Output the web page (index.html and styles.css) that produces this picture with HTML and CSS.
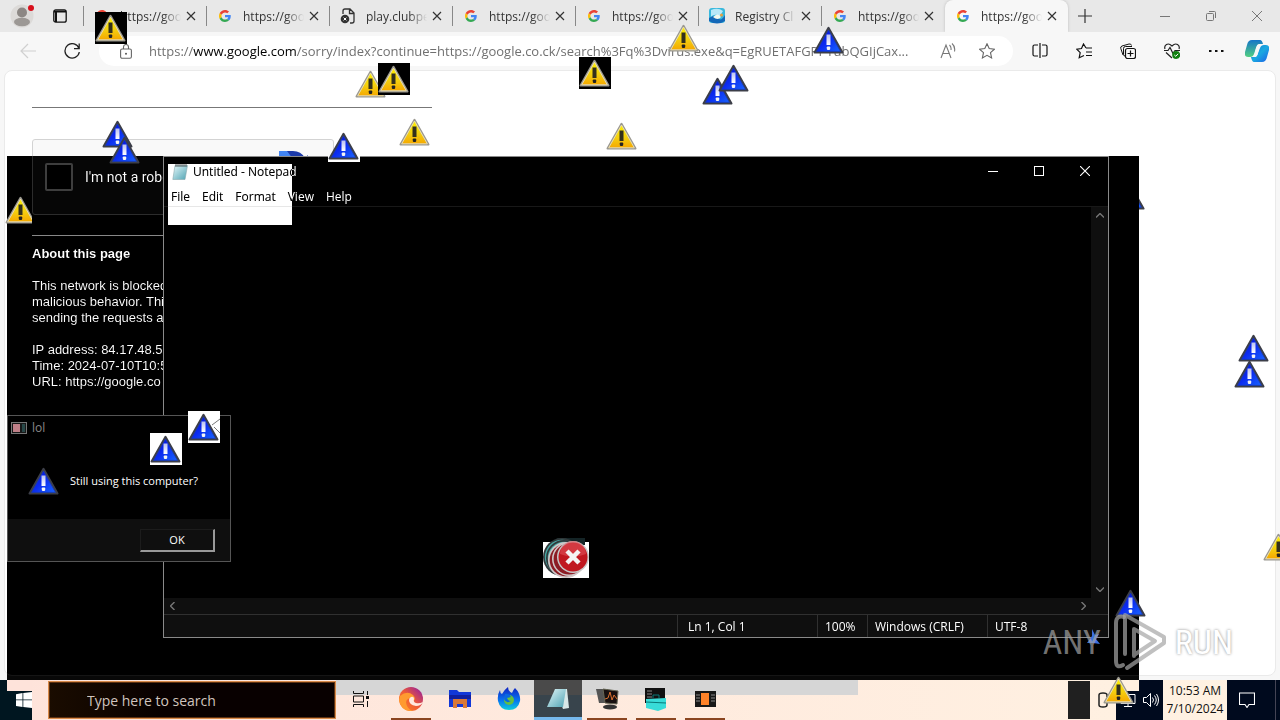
FILE: index.html
```html
<!DOCTYPE html>
<html lang="en">
<head>
<meta charset="utf-8">
<title>Desktop</title>
<link rel="stylesheet" href="styles.css">
</head>
<body>
<svg class="defs" aria-hidden="true">
  <defs>
    <linearGradient id="gy" x1="0" y1="0" x2="0" y2="1"><stop offset="0" stop-color="#fff200"/><stop offset=".55" stop-color="#f4d010"/><stop offset="1" stop-color="#f5a800"/></linearGradient>
    <linearGradient id="gb" x1="0" y1="0" x2="1" y2="1"><stop offset="0" stop-color="#0008d8"/><stop offset=".5" stop-color="#0c2cf0"/><stop offset="1" stop-color="#1864ff"/></linearGradient>
    <linearGradient id="gw" x1="0" y1="0" x2="0" y2="1"><stop offset="0" stop-color="#b8c0f4"/><stop offset="1" stop-color="#fff"/></linearGradient>
    <linearGradient id="co" x1="0" y1="0" x2="1" y2="1"><stop offset="0" stop-color="#1478d4"/><stop offset=".5" stop-color="#1aa9e0"/><stop offset="1" stop-color="#1c5fe8"/></linearGradient>
    <linearGradient id="cg" x1="0" y1="0" x2="0" y2="1"><stop offset="0" stop-color="#1675c8"/><stop offset="1" stop-color="#52cf82"/></linearGradient>
    <linearGradient id="ed" x1="0" y1="1" x2="1" y2="0"><stop offset="0" stop-color="#ff8a1e"/><stop offset=".5" stop-color="#ee5a38"/><stop offset="1" stop-color="#8b18a8"/></linearGradient>
    <linearGradient id="fx" x1="0" y1="0" x2="0" y2="1"><stop offset="0" stop-color="#1020c0"/><stop offset=".6" stop-color="#0878f0"/><stop offset="1" stop-color="#10d0d8"/></linearGradient>
    <linearGradient id="np" x1="0" y1="0" x2="1" y2="1"><stop offset="0" stop-color="#e4f8fa"/><stop offset="1" stop-color="#4fa3b3"/></linearGradient>
    <symbol id="yellow" viewBox="0 0 32 32">
      <path d="M15.500 3.800 29.500 28.600h-28z" fill="#aaa8a0" stroke="#9a9890" stroke-width="2" stroke-linejoin="round"/>
      <path d="M15.500 5 28.300 27.800H2.700z" fill="url(#gy)" stroke="#e8dcb0" stroke-width="1" stroke-linejoin="round"/>
      <path d="M13.500 10.500h4v10.500h-4z" fill="#33301c"/><rect x="13.800" y="22.500" width="3.400" height="3.400" rx=".8" fill="#222"/>
    </symbol>
    <symbol id="blue" viewBox="0 0 32 32">
      <path d="M15.500 3.800 29.500 28.600h-28z" fill="#454858" stroke="#3c3e48" stroke-width="2" stroke-linejoin="round"/>
      <path d="M15.500 6 27.500 27.400h-24z" fill="url(#gb)" stroke="#1838b0" stroke-width=".8" stroke-linejoin="round"/>
      <path d="M13.500 10.500h4v10.500h-4z" fill="url(#gw)"/><rect x="13.800" y="22.500" width="3.400" height="3.400" rx=".8" fill="#f4f4f4"/>
    </symbol>
    <symbol id="g" viewBox="0 0 48 48">
      <path fill="#ea4335" d="M24 9.500c3.540 0 6.710 1.220 9.210 3.600l6.850-6.850C35.900 2.380 30.470 0 24 0 14.620 0 6.510 5.380 2.560 13.220l7.980 6.190C12.430 13.720 17.740 9.500 24 9.500z"/>
      <path fill="#4285f4" d="M46.980 24.550c0-1.570-.15-3.090-.38-4.550H24v9.020h12.940c-.58 2.960-2.260 5.480-4.780 7.180l7.730 6c4.510-4.180 7.090-10.360 7.090-17.650z"/>
      <path fill="#fbbc05" d="M10.530 28.590c-.48-1.450-.76-2.990-.76-4.590s.27-3.140.76-4.590l-7.980-6.190C.92 16.460 0 20.120 0 24s.92 7.540 2.560 10.780z"/>
      <path fill="#34a853" d="M24 48c6.480 0 11.930-2.130 15.890-5.810l-7.730-6c-2.150 1.450-4.920 2.300-8.160 2.300-6.260 0-11.570-4.220-13.470-9.910l-7.980 6.190C6.510 42.620 14.620 48 24 48z"/>
    </symbol>
    <symbol id="x" viewBox="0 0 10 10"><path d="M1 1l8 8M9 1 1 9" stroke="currentColor" stroke-width="1.200"/></symbol>
    <symbol id="err" viewBox="0 0 32 32"><circle cx="16" cy="16" r="16" fill="#c8c8c8"/><circle cx="16" cy="16" r="14.500" fill="#c01820"/><path d="M3 13a13 13 0 0 1 26 0q-13 5-26 0z" fill="#e05058" opacity=".6"/><path d="M10 10l12 12M22 10 10 22" stroke="#f4f4f4" stroke-width="4.500"/></symbol>
    <symbol id="rim" viewBox="0 0 32 32"><circle cx="16" cy="16" r="16" fill="#d0c8c8"/><circle cx="16" cy="16" r="14.500" fill="#8c1c24"/></symbol>
    <symbol id="rimteal" viewBox="0 0 32 32"><circle cx="16" cy="16" r="16" fill="#30383a"/><circle cx="16" cy="16" r="14.500" fill="#48a8a4"/></symbol>
  </defs>
</svg>

<main class="browser">
  <header class="tabs">
    <div class="tabs-lead">
      <svg class="avatar" viewBox="0 0 24 24"><circle cx="12" cy="12" r="11.500" fill="#dcdad8"/><circle cx="12" cy="8.500" r="5" fill="#8c8784"/><ellipse cx="12" cy="18" rx="8" ry="4.200" fill="#9c9895"/><circle cx="21" cy="4" r="3" fill="#d8101c"/></svg>
      <svg class="panes" viewBox="0 0 14 14"><rect x=".8" y=".8" width="12.400" height="12.400" rx="2" fill="none" stroke="#111" stroke-width="1.300"/><path d="M1 2.500h12M3 2v11" stroke="#111" stroke-width="2"/></svg>
    </div>
    <div class="tab"><svg class="fav"><use href="#g"/></svg><span>https://goo</span><button aria-label="Close tab"><svg><use href="#x"/></svg></button></div>
    <div class="tab"><svg class="fav"><use href="#g"/></svg><span>https://goo</span><button aria-label="Close tab"><svg><use href="#x"/></svg></button></div>
    <div class="tab"><svg class="fav doc" viewBox="0 0 16 16"><path d="M3 6V3a2 2 0 0 1 2-2h5l4 4v8a2 2 0 0 1-2 2h-2M9.500 1v4.500H14" fill="none" stroke="#333" stroke-width="1.300"/><circle cx="5" cy="11" r="4.300" fill="#333"/><path d="M3.600 9.600l2.800 2.800M6.400 9.600l-2.800 2.800" stroke="#fff"/></svg><span>play.clubpe</span><button aria-label="Close tab"><svg><use href="#x"/></svg></button></div>
    <div class="tab"><svg class="fav"><use href="#g"/></svg><span>https://goo</span><button aria-label="Close tab"><svg><use href="#x"/></svg></button></div>
    <div class="tab"><svg class="fav"><use href="#g"/></svg><span>https://goo</span><button aria-label="Close tab"><svg><use href="#x"/></svg></button></div>
    <div class="tab"><svg class="fav doc" viewBox="0 0 16 16"><rect width="16" height="15" rx="3" fill="#38b8dc"/><path d="M2 2q7-3 12 1l-3 5q-6-3-9 1z" fill="#b8e8f8"/><path d="M0 10q6-4 9 0t7-3v6q-8 5-16 0z" fill="#1468b8"/><path d="M4 9q5-5 8 0-3 4-8 0z" fill="#f4f8ee"/><circle cx="12.500" cy="7" r="1.500" fill="#e8a040"/></svg><span>Registry Cl</span><button aria-label="Close tab"><svg><use href="#x"/></svg></button></div>
    <div class="tab"><svg class="fav"><use href="#g"/></svg><span>https://goo</span><button aria-label="Close tab"><svg><use href="#x"/></svg></button></div>
    <div class="tab active"><svg class="fav"><use href="#g"/></svg><span>https://goo</span><button aria-label="Close tab"><svg><use href="#x"/></svg></button></div>
    <button class="plus" aria-label="New tab"><svg viewBox="0 0 14 14"><path d="M7 0v14M0 7h14" stroke="#333" stroke-width="1.200"/></svg></button>
    <div class="winbtns">
      <button aria-label="Minimize"><svg viewBox="0 0 10 10"><path d="M0 5.500h10" stroke="#777"/></svg></button>
      <button aria-label="Restore"><svg viewBox="0 0 10 10"><rect x=".5" y="2.500" width="7" height="7" rx="1" fill="none" stroke="#777"/><path d="M3 .5h5.500a1 1 0 0 1 1 1V7" fill="none" stroke="#777"/></svg></button>
      <button aria-label="Close"><svg viewBox="0 0 10 10"><path d="M0 0l10 10M10 0 0 10" stroke="#777"/></svg></button>
    </div>
  </header>
  <div class="toolbar">
    <button class="back" aria-label="Back"><svg viewBox="0 0 16 16"><path d="M16 8H1M8 1 1 8l7 7" fill="none" stroke="#d0d0d0" stroke-width="1.200"/></svg></button>
    <button class="reload" aria-label="Reload"><svg viewBox="0 0 16 16"><path d="M15 5.500A7.200 7.200 0 1 0 15.300 9M15.200 .5v5.200H10" fill="none" stroke="#222" stroke-width="1.300"/></svg></button>
    <div class="address">
      <svg class="lock" viewBox="0 0 12 15"><rect x=".6" y="5" width="10.800" height="9.300" rx="1.500" fill="none" stroke="#666" stroke-width="1.100"/><path d="M3.500 5V3a2.500 2.500 0 0 1 5 0v2" fill="none" stroke="#666" stroke-width="1.100"/><circle cx="6" cy="9.700" r="1" fill="#555"/></svg>
      <div class="url">https://<b>www.google.com</b>/sorry/index?continue=https://google.co.ck/search%3Fq%3Dvirus.exe&amp;q=EgRUETAFGPPYubQGIjCax...</div>
      <svg class="aloud" viewBox="0 0 16 16"><path d="M1 15 6 2l5 13M3 10.500h6.500M9.500 2q2 2 1.500 5M12 .5q3.500 3 2.500 8" fill="none" stroke="#777" stroke-width="1.100"/></svg>
      <svg class="star" viewBox="0 0 16 16"><path d="M8 .8l2.200 4.800 5.200.6-3.900 3.500 1.100 5.200L8 12.300l-4.600 2.600 1.100-5.200L.6 6.200l5.200-.6z" fill="none" stroke="#666" stroke-width="1.100"/></svg>
    </div>
    <nav class="tools">
      <button aria-label="Split screen"><svg viewBox="0 0 16 16"><path d="M6 2H2.500A1.500 1.500 0 0 0 1 3.500v8A1.500 1.500 0 0 0 2.500 13H6M10 2h3.500A1.500 1.500 0 0 1 15 3.500v8a1.500 1.500 0 0 1-1.500 1.500H10M8 0v15" fill="none" stroke="#111" stroke-width="1.200"/></svg></button>
      <button aria-label="Favorites"><svg viewBox="0 0 16 16"><path d="M10 5 7.500 1 5.500 5.500.8 6.200l3.400 3.500-1 5L8 12.500M10 5h6M10 9h6M10 12.500h6" fill="none" stroke="#111" stroke-width="1.200"/></svg></button>
      <button aria-label="Collections"><svg viewBox="0 0 16 16"><path d="M3 12 .8 5.500A2 2 0 0 1 2 3l7-2q2-.5 2.500 1.500M5.500 13H5a1.500 1.500 0 0 1-1.500-1.500v-6A2 2 0 0 1 5.500 3.500H12" fill="none" stroke="#111"/><rect x="5.500" y="5.500" width="10" height="10" rx="2" fill="#f7f7f7" stroke="#111" stroke-width="1.200"/><path d="M10.500 7.500v6M7.500 10.500h6" stroke="#111" stroke-width="1.200"/></svg></button>
      <button aria-label="Browser essentials"><svg viewBox="0 0 16 16"><path d="M1 6Q0 3 2.500 1.500T8 3q3-3 5.500-1.500T15 6M2 9.500 8 15M0 7.500h4l2-3 3 6 2-3h5" fill="none" stroke="#222" stroke-width="1.200"/><circle cx="12.200" cy="12" r="4" fill="#108010"/><path d="M10.300 12l1.500 1.300 2.300-2.500" fill="none" stroke="#fff"/></svg></button>
      <button aria-label="More"><svg viewBox="0 0 16 16"><path d="M1 7h2.500v2H1zM7 7h2.500v2H7zM13 7h2.500v2H13z" fill="#111"/></svg></button>
      <button class="copilot" aria-label="Copilot"><svg viewBox="0 0 24 22"><path d="M7 0h8q2 0 3 4h-4q-2 0-3 4l-2 6q-1 3-4 3H3q-4 0-3-5l2-7Q3 0 7 0z" fill="url(#cg)"/><path d="M17 22H9q-2 0-3-5h4q2 0 3-4l2-5q1-3 4-3h2q4 0 3 5l-2 7q-1 5-5 5z" fill="url(#co)"/><path d="M11 8q1-3 3-3h3q-2 0-3 4l-1 4q-1 4-3 4H7q2 0 3-4z" fill="#f7f7f7"/></svg></button>
    </nav>
  </div>
  <section class="page">
    <hr>
    <div class="captcha">
      <input type="checkbox" id="robot"><label for="robot">I'm not a robot</label>
      <svg class="recap" viewBox="0 0 32 32"><path d="M2 0h14q8 0 12 7l3-3v12H20l4-4a9 9 0 0 0-8-4z" fill="#1c3aa9"/><path d="M2 0h8l6 8a9 9 0 0 0-8 5L2 8z" fill="#4285f4"/></svg>
    </div>
    <hr>
    <article>
      <h1>About this page</h1>
      <p>This network is blocked due to unaddressed abuse complaints about malicious behavior. This page checks to see if it's really a human sending the requests and not a robot coming from this network.</p>
      <p>IP address: 84.17.48.5<br>Time: 2024-07-10T10:5<br>URL: https://google.co</p>
    </article>
  </section>
  <div class="invert"></div>
</main>

<section class="notepad">
  <div class="patch"></div>
  <header class="np-title">
    <svg class="np-icon" viewBox="0 0 16 16"><path d="M3 1.500h12.500L13 15.500H.8z" fill="url(#np)" stroke="#88a8ac" stroke-width=".6"/><path d="M4 0v3M6 0v3M8 0v3M10 0v3M12 0v3M14 0v3" stroke="#333" stroke-width=".8"/></svg>
    <span>Untitled - Notepad</span>
    <div class="np-btns">
      <button aria-label="Minimize"><svg viewBox="0 0 10 10"><path d="M0 5.500h10" stroke="#fff"/></svg></button>
      <button aria-label="Maximize"><svg viewBox="0 0 10 10"><rect x=".5" y=".5" width="9" height="9" fill="none" stroke="#fff"/></svg></button>
      <button aria-label="Close"><svg viewBox="0 0 10 10"><path d="M0 0l10 10M10 0 0 10" stroke="#fff" stroke-width="1.100"/></svg></button>
    </div>
  </header>
  <nav class="menu"><button>File</button><button>Edit</button><button>Format</button><button>View</button><button>Help</button></nav>
  <div class="np-body">
    <div class="np-text"></div>
    <div class="vscroll"><svg viewBox="0 0 8 5"><path d="M0 4.500l4-4 4 4" fill="none" stroke="#777" stroke-width="1.400"/></svg><svg viewBox="0 0 8 5"><path d="M0 .5l4 4 4-4" fill="none" stroke="#777" stroke-width="1.400"/></svg></div>
  </div>
  <div class="hscroll"><svg viewBox="0 0 5 8"><path d="M4.500 0l-4 4 4 4" fill="none" stroke="#777" stroke-width="1.400"/></svg><svg viewBox="0 0 5 8"><path d="M.5 0l4 4-4 4" fill="none" stroke="#777" stroke-width="1.400"/></svg></div>
  <footer class="status"><span class="s0"></span><span class="s1">Ln 1, Col 1</span><span class="s2">100%</span><span class="s3">Windows (CRLF)</span><span class="s4">UTF-8</span></footer>
</section>

<section class="dialog">
  <header><svg viewBox="0 0 16 12"><rect x=".5" y=".5" width="15" height="11" fill="#181818" stroke="#777"/><path d="M2 2h7v8H2z" fill="#c08088"/><path d="M11 2h3v8h-3z" fill="#284848"/></svg><span>lol</span></header>
  <div class="msg"><svg><use href="#blue"/></svg><p>Still using this computer?</p></div>
  <footer><button>OK</button></footer>
</section>

<footer class="taskbar">
  <div class="start"><svg viewBox="0 0 16 16"><path d="M0 2.200 6.500 1v6.500H0zM7.300 .9 16 0v7.500H7.300zM0 8.300h6.500V15L0 13.900zM7.300 8.300H16V16l-8.700-.9z" fill="#fff"/></svg></div>
  <input class="search" type="text" aria-label="Search" placeholder="Type here to search">
  <div class="apps">
    <div class="shade"></div>
    <button class="app first" aria-label="Task View"><svg class="tv" viewBox="0 0 16 16"><path d="M.5 0v2.500h10V0M.5 16v-2.500h10V16M.5 5h10v6H.5zM14.500 0v4M14.500 10v6" fill="none" stroke="#111"/><path d="M13 5h3v3h-3z" fill="#111"/></svg></button>
    <button class="app run" aria-label="Edge"><svg viewBox="0 0 24 24"><circle cx="12" cy="12" r="12" fill="url(#ed)"/><path d="M1 9Q8 3 14 8q4 4 0 6-3 1-2-3Q5 12 8 19q2 4 6 5Q2 25 0 13z" fill="#ff9a30"/><path d="M12 10q3-1 3 2-1 3 2 4t7-1q-2 4-7 4-7-1-7-6 0-2 2-3z" fill="#ffe8df"/></svg></button>
    <button class="app" aria-label="Files"><svg viewBox="0 0 24 24"><path d="M1 3h8l2 2h12v15H1z" fill="#1238d8"/><path d="M1 8h22v4H1z" fill="#1020a0"/><path d="M5 12h14v9h-4v-4H9v4H5z" fill="#d87838"/></svg></button>
    <button class="app" aria-label="Firefox"><svg viewBox="0 0 24 24"><path d="M3 3q0 3 2 4 2-4 6-7 0 4 4 6 1-3 3-5 6 6 5 13-2 9-11 9T1 14Q0 8 3 3z" fill="url(#fx)"/><circle cx="12" cy="13" r="5" fill="#64c040"/><path d="M8 7q4-1 6 3l-4 1q1 3 4 3-5 3-7-2z" fill="#0868e0"/></svg></button>
    <button class="app on" aria-label="Notepad"><svg viewBox="0 0 24 24"><path d="M9 2h12l2 19-6 1z" fill="#d8e8e8"/><path d="M9 2h11l-3 18H1z" fill="url(#np)"/></svg></button>
    <button class="app run" aria-label="Monitor"><svg viewBox="0 0 24 24"><path d="M1 2h12v14H4z" fill="#555"/><path d="M8 2l15 2-1 13-12-1z" fill="#181010" stroke="#665"/><path d="M10 12l3-1 2-6 2 8 2-5 3 4" fill="none" stroke="#d87030"/><ellipse cx="15" cy="20" rx="7" ry="2.500" fill="#333"/></svg></button>
    <button class="app run" aria-label="Tools"><svg viewBox="0 0 24 24"><path d="M1 1h20v15H1z" fill="#111"/><path d="M3 4h5M3 7h5M3 10h5" stroke="#888"/><path d="M2 12l20-1v10l-8 3-12-3z" fill="#38dcd8"/><path d="M9 11V8h6v3M2 15l20 1" fill="none" stroke="#087878"/></svg></button>
    <button class="app run" aria-label="Terminal"><svg viewBox="0 0 24 24"><path d="M2 4h21v16H2z" fill="#181818"/><path d="M3 8h4M3 11h4M3 14h4M18 8h4M18 11h4M18 14h4" stroke="#888"/><path d="M8 6h8v12H8z" fill="#ff8228"/></svg></button>
  </div>
  <div class="block"></div>
  <div class="sync"><svg viewBox="0 0 12 16"><path d="M2 5V3q0-2 4-2t4 2v2M2 11v2q0 2 4 2t4-2v-2M2 5v6M10 6v4" fill="none" stroke="#222" stroke-width="1.500"/></svg></div>
  <div class="tray"><svg viewBox="0 0 16 16"><path d="M1 2.500h14v9H1zM8 11v3M4 14.500h8" fill="none" stroke="#fff"/></svg><svg viewBox="0 0 16 16"><path d="M.5 5.500h3l4-4v13l-4-4h-3zM9.500 5.500q2 2.500 0 5M11.500 3.500q3.500 4.500 0 9M13.500 2q4 6 0 12" fill="none" stroke="#fff"/></svg></div>
  <time>10:53 AM<br>7/10/2024</time>
  <button class="notes" aria-label="Notifications"><svg viewBox="0 0 16 16"><path d="M.5 1h15v11.500H10L8 15.500 6 12.500H.5z" fill="none" stroke="#fff" stroke-width="1.100"/></svg></button>
</footer>

<div class="marks">
  <svg class="m y1 blk"><use href="#yellow"/></svg><svg class="m y2"><use href="#yellow"/></svg><svg class="m y3 blk"><use href="#yellow"/></svg><svg class="m y4"><use href="#yellow"/></svg><svg class="m y5 blk"><use href="#yellow"/></svg><svg class="m y6"><use href="#yellow"/></svg><svg class="m y7"><use href="#yellow"/></svg><svg class="m y8"><use href="#yellow"/></svg><svg class="m y9"><use href="#yellow"/></svg><svg class="m y10"><use href="#yellow"/></svg>
  <svg class="m b1"><use href="#blue"/></svg><svg class="m b2"><use href="#blue"/></svg><svg class="m b3"><use href="#blue"/></svg><svg class="m b4"><use href="#blue"/></svg><svg class="m b5"><use href="#blue"/></svg><svg class="m b6"><use href="#blue"/></svg><svg class="m b7"><use href="#blue"/></svg><svg class="m b8"><use href="#blue"/></svg><svg class="m b9"><use href="#blue"/></svg><svg class="m b10"><use href="#blue"/></svg><svg class="m b11 wht"><path d="M24 14l8-6M26 16l6 6" stroke="#777"/><use href="#blue"/></svg><svg class="m b12 wht"><use href="#blue"/></svg>
  <svg class="shard" viewBox="0 0 14 16"><path d="M0 14 5 7V0l3 6 4-1-3 5 4 5-7-1z" fill="#3c70e0"/></svg>
  <svg class="errs" viewBox="0 0 46 40"><path d="M0 4h46v36H0z" fill="#fff"/><path d="M14 0h28v7H8z" fill="#142426"/><use href="#rimteal" x="0" y="0" width="38" height="38"/><use href="#rimteal" x="3" y="2" width="36" height="36"/><use href="#rim" x="5" y="4" width="36" height="36"/><use href="#rim" x="9" y="4" width="34" height="34"/><use href="#err" x="14" y="3" width="32" height="32"/></svg>
</div>
<div class="watermark"><span>ANY</span><svg viewBox="0 0 56 60"><g fill="none" stroke="currentColor" stroke-width="4" stroke-linejoin="round" stroke-linecap="round"><path d="M11 5Q3 3 3 11v38q0 8 7 4"/><path d="M12 42V3l39 22v6L14 56"/><path d="M21 44V17l21 12-21 14"/></g></svg><span class="run-word">RUN</span></div>
</body>
</html>
```

FILE: styles.css
```css
* { box-sizing: border-box; }
body { margin: 0; height: 100vh; overflow: hidden; display: flex; flex-direction: column; font-family: "Open Sans", "Noto Sans", sans-serif; font-size: 12px; background: #fff; position: relative; }
button { border: 0; background: none; padding: 0; font: inherit; color: inherit; display: flex; align-items: center; justify-content: center; flex: none; }
svg { flex: none; display: block; }
.defs { position: absolute; width: 0; height: 0; }

.browser { flex: 1; min-height: 0; display: flex; flex-direction: column; background: #f7f7f7; position: relative; isolation: isolate; padding-bottom: 4px; }
.tabs { height: 32px; flex: none; background: #e8e8e8; display: flex; }
.tabs-lead { width: 84px; flex: none; display: flex; align-items: center; gap: 19px; padding-left: 10px; }
.avatar { width: 24px; height: 24px; overflow: visible; }
.panes { width: 14px; height: 14px; }
.tab { flex: 0 1 123px; min-width: 0; display: flex; align-items: center; padding: 0 6px 0 12px; position: relative; color: #333; }
.tab::before { content: ""; width: 1px; height: 20px; background: #888; margin-left: -13px; margin-right: 12px; }
.tab.active { background: #f7f7f7; border-radius: 8px 8px 0 0; box-shadow: 0 0 3px #bbb; clip-path: inset(0 -4px 0 -4px); }
.tab.active::before { background: none; }
.fav { width: 12px; height: 12px; margin-right: 12px; }
.fav.doc { width: 16px; height: 16px; margin: 0 10px 0 -2px; }
.tab span { flex: 1; overflow: hidden; white-space: nowrap; -webkit-mask-image: linear-gradient(90deg, #000 70%, transparent); mask-image: linear-gradient(90deg, #000 70%, transparent); }
.tab button { width: 20px; height: 20px; }
.tab button svg { width: 10px; height: 10px; }
.plus { width: 34px; }
.plus svg { width: 14px; height: 14px; }
.winbtns { display: flex; margin-left: auto; }
.winbtns button { width: 46px; }
.winbtns svg { width: 10px; height: 10px; }

.toolbar { height: 38px; flex: none; display: flex; align-items: center; padding-left: 20px; }
.toolbar button svg { width: 16px; height: 16px; }
.reload { margin: 0 19px 0 28px; }
.address { flex: 1; min-width: 0; height: 30px; background: #fff; border-radius: 15px; display: flex; align-items: center; padding: 0 18px 0 21px; }
.lock { width: 12px; height: 15px; margin-right: 17px; }
.url { flex: 1; min-width: 0; overflow: hidden; white-space: nowrap; font-size: 13px; color: #707070; }
.url b { font-weight: 400; color: #000; }
.aloud { width: 16px; height: 16px; margin: 0 23px 0 12px; }
.star { width: 16px; height: 16px; }
.tools { display: flex; align-items: center; gap: 28px; padding: 0 11px 0 19px; }
.copilot { margin-left: -7px; }
.toolbar .copilot svg { width: 24px; height: 22px; }

.page { flex: 1; min-height: 0; overflow: hidden; margin: 0 4px; padding: 36px 27px; background: #fff; border: 1px solid #eaeaea; border-radius: 8px; font-family: "Liberation Sans", Arial, sans-serif; font-size: 13px; line-height: 16px; color: #000; }
.page hr { width: 400px; margin: 0; border: 0; height: 1px; background: #777; }
.captcha { width: 302px; height: 76px; margin: 31px 0 20px; background: #f9f9f9; border: 1px solid #d3d3d3; border-radius: 3px; display: flex; align-items: center; padding: 0 24px 0 12px; font: 14px Roboto, sans-serif; }
.captcha input { appearance: none; width: 28px; height: 28px; margin: 0 12px 0 0; border: 2px solid #c1c1c1; border-radius: 2px; background: #fff; }
.captcha label { flex: 1; }
.recap { width: 32px; height: 32px; align-self: flex-start; margin-top: 11px; }
.page article { width: 400px; }
.page h1 { font-size: 13px; line-height: 16px; margin: 10px 0 16px; }
.page p { margin: 0 0 16px; }
.invert { position: absolute; left: 7px; right: 141px; top: 156px; bottom: 0; background: #fff; mix-blend-mode: difference; }

.notepad { position: absolute; left: 163px; top: 156px; width: 946px; height: 482px; background: #000; border: 1px solid #8a8a8a; color: #fff; display: flex; flex-direction: column; isolation: isolate; line-height: 16px; }
.patch { position: absolute; left: 4px; top: 7px; width: 124px; height: 61px; background: #fff; z-index: -1; }
.np-title { height: 30px; flex: none; display: flex; align-items: center; padding-left: 8px; }
.np-title span { mix-blend-mode: difference; }
.np-icon { width: 16px; height: 16px; margin-right: 5px; }
.np-btns { display: flex; margin-left: auto; align-self: flex-start; }
.np-btns button { width: 46px; height: 28px; }
.np-btns svg { width: 10px; height: 10px; }
.menu { height: 20px; flex: none; display: flex; align-items: center; gap: 12px; padding-left: 7px; mix-blend-mode: difference; border-bottom: 1px solid #181818; }
.np-body { flex: 1; display: flex; }
.np-text { flex: 1; }
.vscroll { width: 17px; background: #0f0f0f; display: flex; flex-direction: column; align-items: center; justify-content: space-between; padding: 6px 0; }
.vscroll svg { width: 8px; height: 5px; }
.hscroll { height: 16px; flex: none; background: #0f0f0f; display: flex; align-items: center; justify-content: space-between; padding: 0 22px 0 6px; }
.hscroll svg { width: 5px; height: 8px; }
.status { height: 23px; flex: none; background: #0f0f0f; border-top: 1px solid #303030; display: flex; }
.status span { border-left: 1px solid #303030; padding: 4px 0 0 7px; white-space: nowrap; }
.status .s0 { flex: 1; border: 0; }
.status .s1 { width: 140px; padding-left: 10px; }
.s2 { width: 50px; }
.s3 { width: 120px; }
.s4 { width: 121px; }

.dialog { position: absolute; left: 7px; top: 415px; width: 224px; height: 147px; background: #000; border: 1px solid #555; color: #fff; display: flex; flex-direction: column; line-height: 16px; font-size: 11px; }
.dialog header { display: flex; align-items: center; gap: 5px; height: 24px; padding-left: 3px; color: #888; font-size: 12px; }
.dialog header svg { width: 16px; height: 12px; }
.msg { flex: 1; display: flex; align-items: center; gap: 10px; padding: 2px 0 0 20px; }
.msg svg { width: 32px; height: 32px; }
.msg p { margin: 0; }
.dialog footer { height: 42px; background: #0f0f0f; display: flex; justify-content: flex-end; align-items: center; padding-right: 15px; }
.dialog footer button { width: 75px; height: 23px; border: 1px solid #1c1c1c; border-right: 2px solid #999; border-bottom: 2px solid #999; }

.taskbar { height: 40px; flex: none; background: linear-gradient(90deg, #fee3da, #fff2e2); display: flex; position: relative; }
.start { width: 32px; display: flex; align-items: center; justify-content: flex-end; background: linear-gradient(#fee3da, #fee3da) 7px 0 / 25px 11px no-repeat #001620; }
.start svg { width: 16px; height: 16px; }
.search { width: 288px; height: 38px; margin: 1px 0 0 16px; border: 1px solid #d98b4a; box-shadow: inset 0 0 0 1px #5c3010; border-radius: 0; background: linear-gradient(90deg, #1a0c00, #080000 40%); padding: 0 0 0 38px; color: #d8c8c0; font: 14px "Open Sans", "Noto Sans", sans-serif; }
.search::placeholder { color: #d0c4be; opacity: 1; }
.apps { flex: 1; display: flex; position: relative; gap: 1px; }
.shade { position: absolute; left: 0; top: 0; width: 522px; height: 15px; background: #d6d6d6; }
.app { width: 48px; position: relative; border-bottom: 3px solid transparent; }
.app.first { width: 50px; }
.app svg { width: 24px; height: 24px; }
.app .tv { width: 18px; height: 16px; }
.run::after { content: ""; position: absolute; left: 4px; right: 4px; bottom: -3px; height: 2px; background: #8a4520; }
.on { background: linear-gradient(#4a4a4a 15px, #38444c 15px); border-bottom-color: #76b9ed; }
.block { width: 22px; height: 38px; margin-top: 1px; background: #202020; }
.sync { width: 26px; display: flex; align-items: center; justify-content: center; }
.sync svg { width: 12px; height: 16px; }
.tray { width: 47px; background: linear-gradient(#fff0e0, #fff0e0) 0 0 / 23px 11px no-repeat #000a1e; display: flex; align-items: center; gap: 7px; padding-left: 4px; }
.tray svg { width: 16px; height: 16px; }
.taskbar time { width: 64px; text-align: center; line-height: 18px; padding-top: 2px; color: #111; white-space: nowrap; }
.notes { width: 53px; background: linear-gradient(#445, #445) 48px 0 / 1px 100% no-repeat #000a1e; padding-right: 13px; }
.notes svg { width: 16px; height: 16px; }

.m { position: absolute; width: 32px; height: 32px; }
.blk { background: #000; }
.wht { background: #fff; }
.y1 { left: 95px; top: 12px; } .y2 { left: 355px; top: 68px; } .y3 { left: 378px; top: 63px; } .y4 { left: 399px; top: 116px; }
.y5 { left: 579px; top: 57px; } .y6 { left: 606px; top: 120px; } .y7 { left: 668px; top: 22px; } .y8 { left: 5px; top: 194px; clip-path: inset(0 5px 0 0); }
.y9 { left: 1263px; top: 531px; clip-path: inset(0 15px 0 0); } .y10 { left: 1103px; top: 674px; }
.b1 { left: 102px; top: 118px; } .b2 { left: 109px; top: 134px; } .b3 { left: 328px; top: 130px; background: linear-gradient(#fff, #fff) bottom / 100% 6px no-repeat; } .b4 { left: 813px; top: 24px; }
.b5 { left: 718px; top: 62px; z-index: 1; } .b6 { left: 702px; top: 75px; } .b7 { left: 1114px; top: 180px; clip-path: inset(0 0 0 25px); }
.b8 { left: 1238px; top: 332px; } .b9 { left: 1234px; top: 358px; } .b10 { left: 1115px; top: 587px; } .b11 { left: 188px; top: 411px; } .b12 { left: 150px; top: 433px; }
.shard { position: absolute; left: 1087px; top: 629px; width: 14px; height: 16px; }
.errs { position: absolute; left: 543px; top: 538px; width: 46px; height: 40px; }
.watermark { position: absolute; right: 47px; bottom: 48px; display: flex; align-items: center; color: rgba(165, 165, 165, .7); font: 34px/60px "Liberation Sans Narrow", "Roboto Condensed", "Noto Sans ExtraCondensed", Roboto, sans-serif; }
.watermark svg { width: 56px; height: 60px; margin: 0 6px 0 12px; }
.run-word { color: #fff; text-shadow: 0 0 3px #888; }
```
